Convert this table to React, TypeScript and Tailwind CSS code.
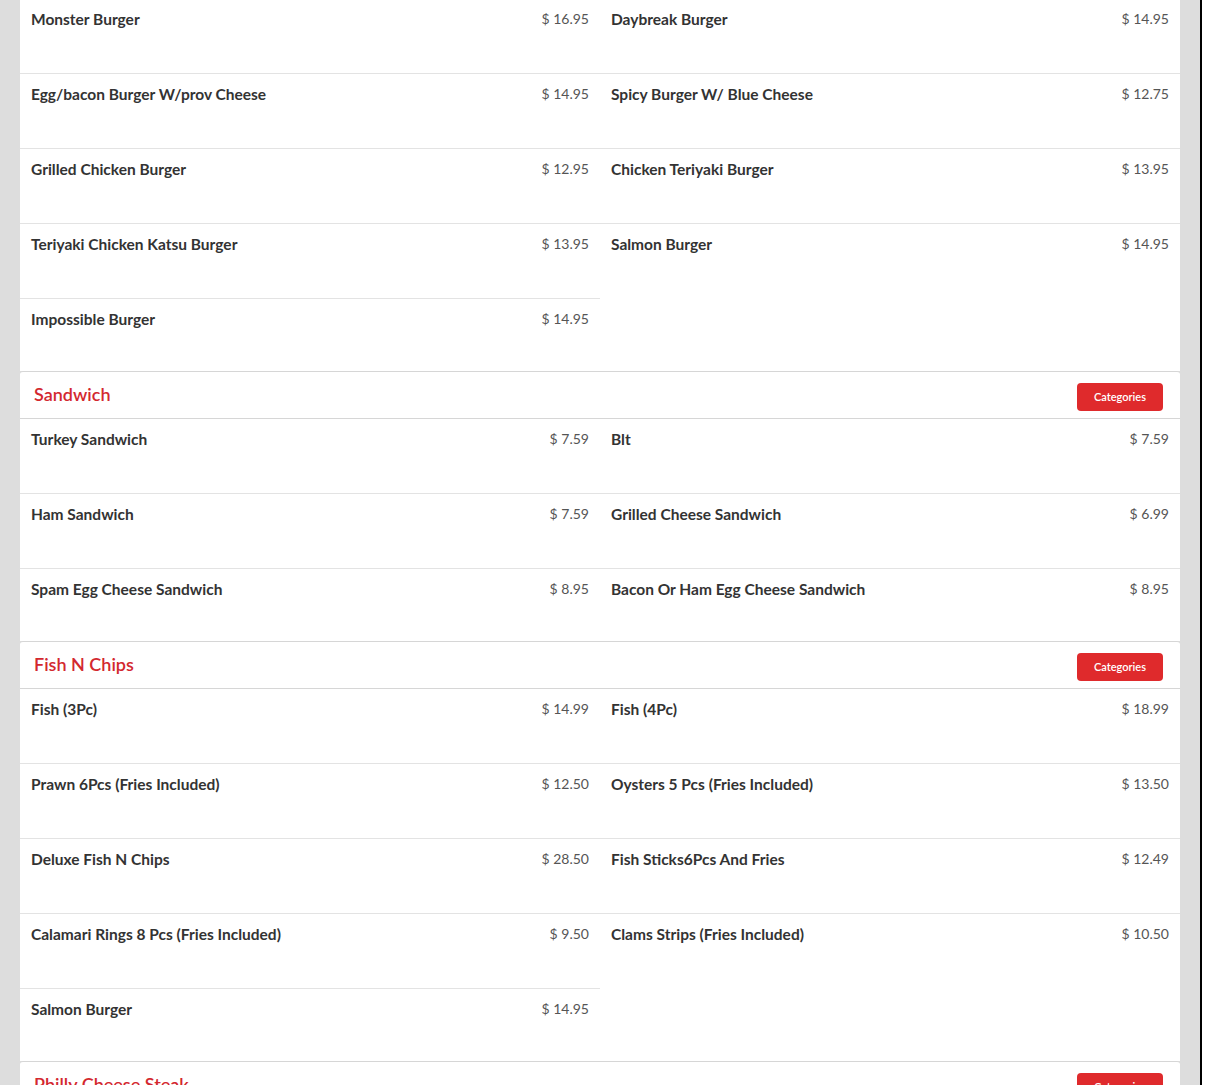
import React from "react";

type Item = { name: string; price: string };

type Section = {
  title: string;
  left: Item[];
  right: Item[];
  header?: boolean;
};

const SECTIONS: Section[] = [
  {
    title: "Burger",
    header: false,
    left: [
      { name: "Monster Burger", price: "16.95" },
      { name: "Egg/bacon Burger W/prov Cheese", price: "14.95" },
      { name: "Grilled Chicken Burger", price: "12.95" },
      { name: "Teriyaki Chicken Katsu Burger", price: "13.95" },
      { name: "Impossible Burger", price: "14.95" },
    ],
    right: [
      { name: "Daybreak Burger", price: "14.95" },
      { name: "Spicy Burger W/ Blue Cheese", price: "12.75" },
      { name: "Chicken Teriyaki Burger", price: "13.95" },
      { name: "Salmon Burger", price: "14.95" },
    ],
  },
  {
    title: "Sandwich",
    left: [
      { name: "Turkey Sandwich", price: "7.59" },
      { name: "Ham Sandwich", price: "7.59" },
      { name: "Spam Egg Cheese Sandwich", price: "8.95" },
    ],
    right: [
      { name: "Blt", price: "7.59" },
      { name: "Grilled Cheese Sandwich", price: "6.99" },
      { name: "Bacon Or Ham Egg Cheese Sandwich", price: "8.95" },
    ],
  },
  {
    title: "Fish N Chips",
    left: [
      { name: "Fish (3Pc)", price: "14.99" },
      { name: "Prawn 6Pcs (Fries Included)", price: "12.50" },
      { name: "Deluxe Fish N Chips", price: "28.50" },
      { name: "Calamari Rings 8 Pcs (Fries Included)", price: "9.50" },
      { name: "Salmon Burger", price: "14.95" },
    ],
    right: [
      { name: "Fish (4Pc)", price: "18.99" },
      { name: "Oysters 5 Pcs (Fries Included)", price: "13.50" },
      { name: "Fish Sticks6Pcs And Fries", price: "12.49" },
      { name: "Clams Strips (Fries Included)", price: "10.50" },
    ],
  },
  {
    title: "Philly Cheese Steak",
    left: [],
    right: [],
  },
];

function MenuRow({ item, last }: { item: Item; last: boolean }) {
  return (
    <div
      className={
        last
          ? "flex h-[72px] items-start justify-between px-[11px] pt-[10px]"
          : "flex h-[75px] items-start justify-between border-b border-[#e3e3e3] px-[11px] pt-[10px]"
      }
    >
      <span className="text-[15.5px] font-bold leading-[20px] text-[#333333]">{item.name}</span>
      <span className="pt-px text-[14px] leading-[18px] text-[#555555]">$ {item.price}</span>
    </div>
  );
}

function MenuSection({ section }: { section: Section }) {
  return (
    <div className={section.header === false ? "bg-white" : "rounded-t-[3px] border-t border-[#d6d6d6] bg-white"}>
      {section.header !== false && (
        <div className="flex h-[47px] items-start justify-between border-b border-[#d6d6d6] pl-[14px] pr-[17px]">
          <h2 className="mt-[12px] text-[18px] font-semibold leading-[20px] text-[#d3282f]">{section.title}</h2>
          <button className="mt-[11px] h-7 w-[86px] rounded-[4px] bg-[#df2a2c] text-[11px] font-semibold text-white">
            Categories
          </button>
        </div>
      )}
      <div className="grid grid-cols-2">
        <div>
          {section.left.map((item, i) => (
            <MenuRow key={item.name + i} item={item} last={i === section.left.length - 1} />
          ))}
        </div>
        <div>
          {section.right.map((item, i) => (
            <MenuRow key={item.name + i} item={item} last={i === section.right.length - 1} />
          ))}
        </div>
      </div>
    </div>
  );
}

export default function App() {
  return (
    <div className="flex h-[1085px] w-[1210px] overflow-hidden bg-white font-['Lato','Liberation_Sans',sans-serif]">
      <div className="w-[1200px] shrink-0 bg-[#dddddd] px-5">
        <div className="-mt-px">
          {SECTIONS.map((s) => (
            <MenuSection key={s.title} section={s} />
          ))}
        </div>
      </div>
      <div className="w-[2px] shrink-0 bg-black" />
      <div className="flex-1 bg-white" />
    </div>
  );
}
